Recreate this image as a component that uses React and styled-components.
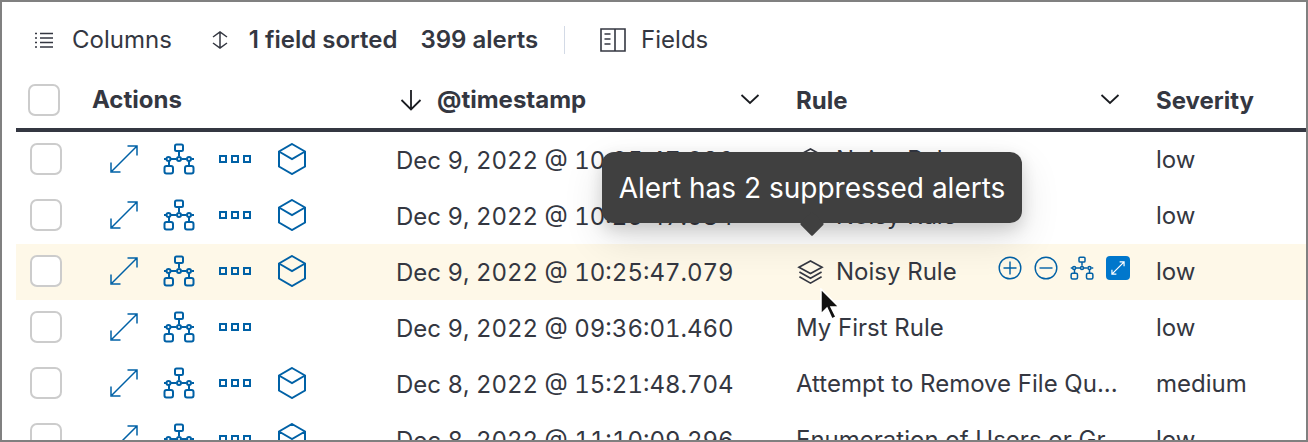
import React from "react";
import styled, { createGlobalStyle } from "styled-components";

const Global = createGlobalStyle`
  html, body { margin: 0; padding: 0; background: #fff; }
  body { font-family: Inter, "Liberation Sans", sans-serif; color: #343741; }
`;
const Frame = styled.div`
  position: relative; width: 1308px; height: 442px; box-sizing: border-box;
  border: 2px solid #808080; overflow: hidden; background: #fff;
`;
const Toolbar = styled.div`
  display: flex; align-items: center; height: 74px; padding: 2px 0 0 33px; box-sizing: border-box; font-size: 24px; line-height: 30px;
`;
const ToolItem = styled.div`
  display: flex; align-items: center; gap: ${p => p.$gap ?? 18}px; margin-right: ${p => p.$mr ?? 0}px;
  font-weight: ${p => p.$bold ? 600 : 400}; color: #343741; white-space: nowrap;
`;
const Divider = styled.div`
  width: 1px; height: 28px; background: #d3dae6; margin-right: 35px;
`;
const Grid = styled.div`
  display: grid; grid-template-columns: 76px 304px 400px 360px 1fr; margin-left: 14px; align-items: center;
  height: ${p => p.$h}px; background: ${p => p.$hi ? "#fef8e8" : "transparent"};
`;
const Head = styled(Grid)`
  border-bottom: 4px solid #343741; box-sizing: content-box; font-weight: 700; font-size: 24px;
`;
const Check = styled.div`
  width: 28px; height: 28px; border: 2px solid #ccc; border-radius: 7px; background: #fff;
  margin-left: ${p => p.$ml}px; margin-bottom: ${p => p.$mb}px;
`;
const HeadCell = styled.div`
  display: flex; align-items: center; padding-right: 36px; white-space: nowrap; height: 100%;
  justify-content: space-between;
`;
const HeadLabel = styled.span`
  display: flex; align-items: center; gap: 15px; padding-left: ${p => p.$pl ?? 0}px; padding-bottom: ${p => p.$pb}px;
`;
const ChevronWrap = styled.span`
  display: flex; padding-bottom: 6px;
`;
const Actions = styled.div`
  display: flex; align-items: center; padding: 0 0 3px 17px; height: 100%; box-sizing: border-box;
`;
const IconSlot = styled.span`
  display: flex; width: ${p => p.$w}px; flex: none; color: #0061a6;
`;
const Cell = styled.div`
  font-size: 24px; line-height: 32px; white-space: nowrap; display: flex; align-items: center; position: relative; height: 100%;
`;
const TimeCell = styled(Cell)`
  font-variant-numeric: tabular-nums; font-feature-settings: "tnum" 1; padding-top: 2px; box-sizing: border-box;
`;
const RuleText = styled.span`
  margin-left: ${p => p.$ml ?? 0}px;
`;
const StackWrap = styled.span`
  display: flex; margin-left: 1px;
`;
const HoverTools = styled.div`
  position: absolute; left: 202px; top: 12px; display: flex; gap: 12px; align-items: center; color: #0061a6;
`;
const BlueBtn = styled.span`
  width: 24px; height: 24px; border-radius: 4px; background: #0077cc; color: #fff; display: flex; align-items: center; justify-content: center;
`;
const Tooltip = styled.div`
  position: absolute; left: 600px; top: 150px; width: 420px; height: 71px; box-sizing: border-box; background: #404040; color: #fff;
  border-radius: 12px; font-size: 28px; line-height: 73px; text-align: center; white-space: nowrap;
  box-shadow: 0 6px 16px rgba(0,0,0,.14), 0 16px 40px rgba(0,0,0,.12);
  &::after {
    content: ""; position: absolute; left: 198px; bottom: -13px; width: 24px; height: 24px;
    background: #404040; transform: rotate(45deg) scale(.72); transform-origin: center; border-radius: 2px;
  }
`;
const Cursor = styled.svg`
  position: absolute; left: 817px; top: 286px;
`;

const S = { fill: "none", stroke: "currentColor" };

const Expand = ({ size = 30, sw = 1.5 }) => (
  <svg width={size} height={size} viewBox="0 0 30 30" {...S} strokeWidth={sw}>
    <path d="M2 18.5V28h9.5M18.5 2H28v9.5M3 27 27.5 2.5" />
  </svg>
);
const Net = ({ size = 32, sw = 2 }) => (
  <svg width={size} height={size} viewBox="0 0 32 32" {...S} strokeWidth={sw}>
    <rect x="12" y="1.5" width="8" height="6.5" rx="1.5" />
    <path d="M16 8v5M1 16h2.5M7.5 16h6M18.5 16h5M28.5 16H31M6 18v4.5M26 18v4.5" />
    <circle cx="5.5" cy="16" r="2" /><circle cx="16" cy="16" r="2" /><circle cx="26" cy="16" r="2" />
    <rect x="1.5" y="23" width="8.5" height="7.5" rx="2" />
    <rect x="22" y="23" width="8.5" height="7.5" rx="2" />
  </svg>
);
const Dots = () => (
  <svg width="32" height="14" viewBox="0 0 32 14" {...S} strokeWidth="2">
    <rect x="1" y="4" width="6" height="6" /><rect x="13" y="4" width="6" height="6" /><rect x="25" y="4" width="6" height="6" />
  </svg>
);
const Cube = () => (
  <svg width="30" height="32" viewBox="0 0 30 32" {...S} strokeWidth="2">
    <path d="M15 1 28 8.5v15L15 31 2 23.5v-15ZM2 8.5 15 16 28 8.5" />
  </svg>
);
const Stack = () => (
  <svg width="27" height="28" viewBox="0 0 28 28" fill="none" stroke="#343741" strokeWidth="1.7">
    <path d="M14 2.5 26 9 14 15.5 2 9ZM2.5 14 14 20.5 25.5 14M2.5 19 14 25.5 25.5 19" />
  </svg>
);
const ListIcon = () => (
  <svg width="18" height="16" viewBox="0 0 18 16" {...S} strokeWidth="1.4">
    <path d="M0 1.5h2M5 1.5h13M0 6h2M5 6h13M0 10.5h2M5 10.5h13M0 15h2M5 15h13" />
  </svg>
);
const SortIcon = () => (
  <svg width="16" height="18" viewBox="0 0 16 18" {...S} strokeWidth="1.5">
    <path d="M1 6 8 1l7 5M1 12l7 5 7-5M8 1v16" />
  </svg>
);
const FieldsIcon = () => (
  <svg width="26" height="24" viewBox="0 0 26 24" {...S} strokeWidth="1.6">
    <path d="M1 1h24v22H1ZM15 1v22M4.5 6h6M4.5 11h6M4.5 16h6" />
  </svg>
);
const Chevron = () => (
  <svg width="20" height="12" viewBox="0 0 20 12" {...S} stroke="#1a1c21" strokeWidth="1.8">
    <path d="M1.5 2 10 10l8.5-8" />
  </svg>
);
const ArrowDown = () => (
  <svg width="22" height="22" viewBox="0 0 22 22" {...S} stroke="#1a1c21" strokeWidth="1.8">
    <path d="M11 1v19M1.5 11 11 20.5 20.5 11" />
  </svg>
);
const Plus = () => (
  <svg width="24" height="24" viewBox="0 0 24 24" {...S} strokeWidth="1.4">
    <circle cx="12" cy="12" r="10.8" /><path d="M12 5.5v13M5.5 12h13" />
  </svg>
);
const Minus = () => (
  <svg width="24" height="24" viewBox="0 0 24 24" {...S} strokeWidth="1.4">
    <circle cx="12" cy="12" r="10.8" /><path d="M5.5 12h13" />
  </svg>
);

const rows = [
  { t: "Dec 9, 2022 @ 10:25:47.086", rule: "Noisy Rule", stack: true, sev: "low", cube: true },
  { t: "Dec 9, 2022 @ 10:25:47.084", rule: "Noisy Rule", stack: true, sev: "low", cube: true },
  { t: "Dec 9, 2022 @ 10:25:47.079", rule: "Noisy Rule", stack: true, sev: "low", cube: true, hi: true },
  { t: "Dec 9, 2022 @ 09:36:01.460", rule: "My First Rule", sev: "low" },
  { t: "Dec 8, 2022 @ 15:21:48.704", rule: "Attempt to Remove File Qu...", sev: "medium", cube: true },
  { t: "Dec 8, 2022 @ 11:10:09.296", rule: "Enumeration of Users or Gr...", sev: "low", cube: true },
];

export default function App() {
  return (
    <>
      <Global />
      <Frame>
        <Toolbar>
          <ToolItem $gap={19} $mr={40}><ListIcon />Columns</ToolItem>
          <ToolItem $gap={21} $mr={23} $bold><SortIcon />1 field sorted</ToolItem>
          <ToolItem $mr={26} $bold>399 alerts</ToolItem>
          <Divider />
          <ToolItem $gap={15}><FieldsIcon />Fields</ToolItem>
        </Toolbar>
        <Head $h={52}>
          <Check $ml={12} $mb={4} />
          <HeadCell><HeadLabel $pb={5}>Actions</HeadLabel></HeadCell>
          <HeadCell>
            <HeadLabel $pl={4} $pb={5}><ArrowDown />@timestamp</HeadLabel><ChevronWrap><Chevron /></ChevronWrap>
          </HeadCell>
          <HeadCell>
            <HeadLabel $pb={3}>Rule</HeadLabel><ChevronWrap><Chevron /></ChevronWrap>
          </HeadCell>
          <HeadCell><HeadLabel $pb={3}>Severity</HeadLabel></HeadCell>
        </Head>
        {rows.map((r, i) => (
          <Grid key={i} $h={56} $hi={r.hi}>
            <Check $ml={14} $mb={2} />
            <Actions>
              <IconSlot $w={54}><Expand /></IconSlot>
              <IconSlot $w={56}><Net /></IconSlot>
              <IconSlot $w={58}><Dots /></IconSlot>
              {r.cube && <IconSlot $w={30}><Cube /></IconSlot>}
            </Actions>
            <TimeCell>{r.t}</TimeCell>
            <Cell>
              {r.stack && <StackWrap><Stack /></StackWrap>}
              <RuleText $ml={r.stack ? 12 : 0}>{r.rule}</RuleText>
              {r.hi && (
                <HoverTools>
                  <Plus /><Minus /><Net size={24} sw={2} />
                  <BlueBtn><Expand size={14} sw={2.6} /></BlueBtn>
                </HoverTools>
              )}
            </Cell>
            <Cell>{r.sev}</Cell>
          </Grid>
        ))}
        <Tooltip>Alert has 2 suppressed alerts</Tooltip>
        <Cursor width="22" height="34" viewBox="0 0 22 34">
          <path d="M2 1v25l6-6 5 11 4-2-5-10h8Z" fill="#111" stroke="#fff" strokeWidth="1.5" />
        </Cursor>
      </Frame>
    </>
  );
}
